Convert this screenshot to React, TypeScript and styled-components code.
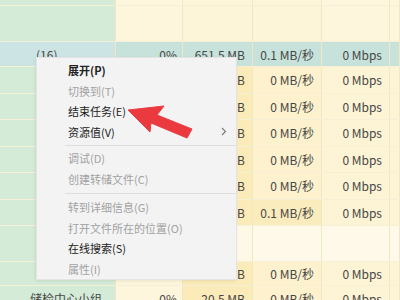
import React from "react";
import styled, { createGlobalStyle } from "styled-components";

const Global = createGlobalStyle`
  html, body { margin: 0; padding: 0; width: 400px; height: 300px; overflow: hidden; background: #fdf6dc; }
  * { box-sizing: border-box; }
`;

const Screen = styled.div`
  position: relative;
  width: 400px;
  height: 300px;
  overflow: hidden;
  font-family: "Noto Sans CJK SC", "Noto Sans", sans-serif;
`;

const Table = styled.div`
  display: flex;
  flex-direction: column;
`;

const Row = styled.div<{ $h: number }>`
  display: grid;
  grid-template-columns: 116px 67px 70px 69px 68px 1fr;
  height: ${(p) => p.$h}px;
  flex: none;
  border-bottom: 1px solid rgba(225, 225, 200, 0.35);
`;

const Cell = styled.div<{ $bg: string; $align?: "left" | "right"; $pr?: number; $pl?: number }>`
  background: ${(p) => p.$bg};
  display: flex;
  align-items: center;
  justify-content: ${(p) => (p.$align === "left" ? "flex-start" : "flex-end")};
  padding-right: ${(p) => p.$pr ?? 7}px;
  padding-left: ${(p) => p.$pl ?? 0}px;
  border-right: 1px solid #f1e7c4;
  font-size: 12px;
  color: #474747;
  white-space: nowrap;
  overflow: hidden;
`;

const Menu = styled.div`
  position: absolute;
  left: 36px;
  top: 57px;
  width: 201px;
  height: 223px;
  background: #f3f3f3;
  border: 1px solid #e4e4e4;
  box-shadow: -1px 1px 3px rgba(0, 0, 0, 0.08);
  padding: 2px 0;
  display: flex;
  flex-direction: column;
`;

const Item = styled.div<{ $disabled?: boolean; $bold?: boolean }>`
  height: 20.5px;
  flex: none;
  display: flex;
  align-items: center;
  padding-left: 31px;
  padding-right: 9px;
  font-size: 11px;
  color: ${(p) => (p.$disabled ? "#a2a2a2" : "#222222")};
  font-weight: ${(p) => (p.$bold ? 700 : 400)};
`;

const Label = styled.span`
  flex: 1;
`;

const Sep = styled.div<{ $h: number }>`
  height: ${(p) => p.$h}px;
  flex: none;
  display: flex;
  align-items: center;
  padding-left: 28px;
  &::after {
    content: "";
    display: block;
    flex: 1;
    height: 1px;
    background: #dedede;
  }
`;

const Arrow = styled.svg`
  position: absolute;
  left: 0;
  top: 0;
  pointer-events: none;
`;

const GREEN = "#d3ebd7";
const HL_NAME = "#cce5e4";
const HL = "#c6e2db";
const CREAM = "#fdf6dc";
const MEM = "#fbebb9";
const DISK = "#fdf2cd";
const NET = "#fdf4d5";

type R = {
  h: number;
  kind: "top" | "hl" | "norm" | "blank";
  name?: string;
  cpu?: string;
  mem?: string;
  disk?: string;
  net?: string;
  diskHot?: boolean;
};

const rows: R[] = [
  { h: 6, kind: "top" },
  { h: 36, kind: "top" },
  { h: 25, kind: "hl", name: "(16)", cpu: "0%", mem: "651.5 MB", disk: "0.1 MB/秒", net: "0 Mbps" },
  { h: 26.5, kind: "norm", cpu: "0%", mem: "48.6 MB", disk: "0 MB/秒", net: "0 Mbps" },
  { h: 26.5, kind: "norm", cpu: "0%", mem: "32.1 MB", disk: "0 MB/秒", net: "0 Mbps" },
  { h: 26.5, kind: "norm", cpu: "0%", mem: "25.4 MB", disk: "0 MB/秒", net: "0 Mbps" },
  { h: 26.5, kind: "norm", cpu: "0%", mem: "18.9 MB", disk: "0 MB/秒", net: "0 Mbps" },
  { h: 26.5, kind: "norm", cpu: "0%", mem: "9.8 MB", disk: "0 MB/秒", net: "0 Mbps" },
  { h: 26.5, kind: "norm", cpu: "0%", mem: "76.3 MB", disk: "0.1 MB/秒", net: "0 Mbps", diskHot: true },
  { h: 36, kind: "blank" },
  { h: 24, kind: "norm", cpu: "0%", mem: "12.7 MB", disk: "0 MB/秒", net: "0 Mbps" },
  { h: 26, kind: "norm", name: "储检中心小组", cpu: "0%", mem: "20.5 MB", disk: "0 MB/秒", net: "0 Mbps" },
];

function bgs(r: R): string[] {
  if (r.kind === "top") return [GREEN, CREAM, "#fdf5d8", "#fdf5d8", "#fdf6dc", "#fdf6dc"];
  if (r.kind === "hl") return [HL_NAME, HL, HL, HL, HL, HL];
  if (r.kind === "blank") return [GREEN, "#fef9e9", "#fef8e6", "#fef9e9", "#fef9e9", "#fef9e9"];
  return [GREEN, CREAM, MEM, r.diskHot ? "#fbecbe" : DISK, NET, NET];
}

type MI = { label: string; disabled?: boolean; bold?: boolean; sub?: boolean } | { sep: number };

const menu: MI[] = [
  { label: "展开(P)", bold: true },
  { label: "切换到(T)", disabled: true },
  { label: "结束任务(E)" },
  { label: "资源值(V)", sub: true },
  { sep: 6 },
  { label: "调试(D)", disabled: true },
  { label: "创建转储文件(C)", disabled: true },
  { sep: 8 },
  { label: "转到详细信息(G)", disabled: true },
  { label: "打开文件所在的位置(O)", disabled: true },
  { label: "在线搜索(S)" },
  { label: "属性(I)", disabled: true },
];

export default function App() {
  return (
    <Screen>
      <Global />
      <Table>
        {rows.map((r, i) => {
          const b = bgs(r);
          return (
            <Row key={i} $h={r.h}>
              <Cell $bg={b[0]} $align="left" $pl={r.kind === "hl" ? 36 : 30}>
                {r.name}
              </Cell>
              <Cell $bg={b[1]} $pr={5}>{r.cpu}</Cell>
              <Cell $bg={b[2]}>{r.mem}</Cell>
              <Cell $bg={b[3]}>{r.disk}</Cell>
              <Cell $bg={b[4]}>{r.net}</Cell>
              <Cell $bg={b[5]} />
            </Row>
          );
        })}
      </Table>
      <Menu>
        {menu.map((m, i) =>
          "sep" in m ? (
            <Sep key={i} $h={m.sep} />
          ) : (
            <Item key={i} $disabled={m.disabled} $bold={m.bold}>
              <Label>{m.label}</Label>
              {m.sub && (
                <svg width="6" height="9" viewBox="0 0 6 9">
                  <path d="M1 1 L4.5 4.5 L1 8" fill="none" stroke="#777" strokeWidth="1.1" />
                </svg>
              )}
            </Item>
          )
        )}
      </Menu>
      <Arrow width="400" height="300" viewBox="0 0 400 300">
        <polygon
          points="128,110 164,106 157,115 192,129 187,138 151,123 150,132"
          fill="#ea3a40"
          stroke="#ea3a40"
          strokeWidth="1"
          strokeLinejoin="round"
        />
      </Arrow>
    </Screen>
  );
}
